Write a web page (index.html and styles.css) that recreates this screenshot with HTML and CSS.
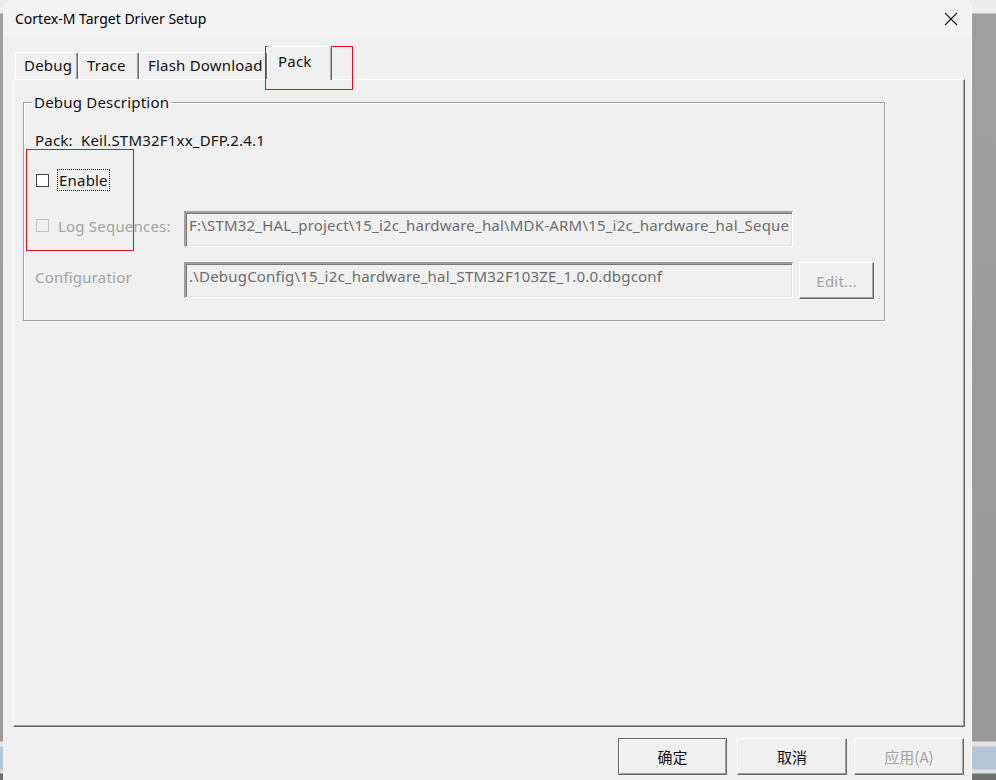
FILE: index.html
```html
<!DOCTYPE html>
<html>
<head>
<meta charset="utf-8">
<link rel="stylesheet" href="styles.css">
</head>
<body>
<div class="window">
  <div class="titlebar">
    <span class="title">Cortex-M Target Driver Setup</span>
    <svg class="close" width="14" height="14" viewBox="0 0 14 14"><path d="M1 1 L13 13 M13 1 L1 13" stroke="#1a1a1a" stroke-width="1.1" fill="none"/></svg>
  </div>
  <div class="body">
    <div class="tabs">
      <div class="tab tab-debug">Debug</div>
      <div class="tab tab-trace">Trace</div>
      <div class="tab tab-flash">Flash Download</div>
      <div class="tab tab-pack active">Pack</div>
    </div>
    <div class="panel">
      <div class="group">
        <div class="group-title">Debug Description</div>
        <div class="pack-row">Pack:&nbsp; Keil.STM32F1xx_DFP.2.4.1</div>
        <div class="enable-row">
          <span class="check"></span>
          <span class="focus">Enable</span>
        </div>
        <div class="log-row">
          <span class="check disabled"></span>
          <span class="lbl log-lbl">Log Sequences:</span>
          <div class="field">F:\STM32_HAL_project\15_i2c_hardware_hal\MDK-ARM\15_i2c_hardware_hal_Seque</div>
        </div>
        <div class="cfg-row">
          <span class="lbl cfg-lbl">Configuratior</span>
          <div class="field">.\DebugConfig\15_i2c_hardware_hal_STM32F103ZE_1.0.0.dbgconf</div>
          <div class="btn edit">Edit...</div>
        </div>
      </div>
    </div>
    <div class="buttons">
      <div class="btn dlg default">确定</div>
      <div class="btn dlg cancel">取消</div>
      <div class="btn dlg apply">应用(<u>A</u>)</div>
    </div>
  </div>
</div>
<div class="mark mark-tab"></div>
<div class="mark mark-checks"></div>
</body>
</html>
```
FILE: styles.css
```css
* { box-sizing: border-box; }
html, body { margin: 0; padding: 0; }
body {
  width: 996px;
  height: 780px;
  overflow: hidden;
  font-family: "Noto Sans", "Noto Sans CJK SC", sans-serif;
  font-size: 15px;
  letter-spacing: 0.2px;
  color: #111;
  background: linear-gradient(to bottom, #ececec 0, #ececec 13px, #9f9f9f 14px, #9a9a9a 741px, #e4e4e4 742px, #e4e4e4 746px, #b6c6d6 747px, #b6c6d6 769px, #dedede 770px, #dedede 773px, #6f6f6f 774px);
}
.window {
  margin-left: 3px;
  width: 969px;
  height: 780px;
  background: #f0f0f0;
  border-radius: 8px 8px 0 0;
  border-right: 1px solid #f7f7f7;
  display: flex;
  flex-direction: column;
}
.titlebar {
  height: 38px;
  flex: none;
  background: #f3f3f3;
  border-radius: 8px 8px 0 0;
  display: flex;
  align-items: center;
  padding-left: 12px;
  padding-right: 13px;
}
.title {
  font-size: 14px;
  letter-spacing: 0;
  color: #000;
  flex: 1;
  margin-top: -1px;
}
.close { display: block; margin-top: -1px; }

.body {
  padding-left: 10px;
  display: flex;
  flex-direction: column;
}
.tabs {
  margin-top: 8px;
  height: 33px;
  display: flex;
  align-items: flex-end;
  padding-left: 2px;
}
.tab {
  height: 27px;
  line-height: 25px;
  padding-left: 8px;
  background: #f0f0f0;
  border-top: 1px solid #fff;
  border-left: 1px solid #fff;
  border-right: 1px solid #6a6a6a;
  box-shadow: inset -1px 0 0 #a0a0a0;
  border-radius: 2px 2px 0 0;
  color: #111;
  white-space: nowrap;
}
.tab-debug { width: 63px; }
.tab-trace { width: 61px; }
.tab-flash { width: 128px; }
.tab-pack {
  width: 65px;
  height: 34px;
  margin-bottom: -1px;
  line-height: 28px;
  padding-left: 10px;
  position: relative;
  z-index: 1;
}

.panel {
  width: 952px;
  height: 648px;
  background: #f0f0f0;
  border-top: 1px solid #fff;
  border-left: 1px solid #fff;
  border-right: 1px solid #6a6a6a;
  border-bottom: 1px solid #6a6a6a;
  box-shadow: inset -1px -1px 0 #a0a0a0;
  padding-top: 22px;
  padding-left: 9px;
}
.group {
  width: 862px;
  height: 219px;
  border: 1px solid #a0a0a0;
  box-shadow: inset 1px 1px 0 #fff, 1px 1px 0 #fff;
  padding-left: 11px;
}
.group-title {
  width: fit-content;
  margin-top: -11px;
  margin-left: -3px;
  padding: 0 2px;
  line-height: 20px;
  background: #f0f0f0;
  color: #111;
}
.pack-row {
  margin-top: 18px;
  line-height: 20px;
  color: #111;
}
.enable-row {
  margin-top: 19px;
  display: flex;
  align-items: center;
  height: 22px;
}
.check {
  width: 13px;
  height: 13px;
  margin-left: 1px;
  border: 1px solid #444;
  background: #fff;
  flex: none;
}
.check.disabled {
  border-color: #c4c4c4;
  background: #f0f0f0;
  margin-top: 8px;
}
.focus {
  margin-left: 8px;
  border: 1px dotted #222;
  padding: 0 1px;
  line-height: 20px;
  color: #111;
}
.log-row, .cfg-row {
  display: flex;
  align-items: flex-start;
  height: 36px;
}
.log-row { margin-top: 20px; }
.cfg-row { margin-top: 15px; }
.lbl {
  color: #a3a3a3;
  line-height: 20px;
  margin-top: 5px;
  flex: none;
  white-space: nowrap;
}
.log-lbl { margin-left: 9px; width: 126px; }
.cfg-lbl { width: 149px; }
.field {
  width: 609px;
  height: 36px;
  flex: none;
  border-top: 2px solid #a0a0a0;
  border-left: 2px solid #a0a0a0;
  border-right: 1px solid #fff;
  border-bottom: 1px solid #fff;
  box-shadow: inset 1px 1px 0 #7a7a7a, inset -1px -1px 0 #e3e3e3;
  padding: 2px 2px 0 3px;
  line-height: 20px;
  color: #6d6d6d;
  white-space: nowrap;
  overflow: hidden;
}
.btn {
  background: #f0f0f0;
  border-top: 1px solid #fff;
  border-left: 1px solid #fff;
  border-right: 1px solid #6a6a6a;
  border-bottom: 1px solid #6a6a6a;
  box-shadow: inset -1px -1px 0 #a0a0a0;
  display: flex;
  align-items: center;
  justify-content: center;
  flex: none;
}
.edit {
  margin-left: 6px;
  width: 75px;
  height: 37px;
  color: #a3a3a3;
}
.buttons {
  margin-top: 11px;
  display: flex;
  justify-content: flex-end;
  padding-right: 7px;
}
.dlg {
  width: 110px;
  height: 37px;
  font-family: "Noto Sans CJK SC", sans-serif;
  font-size: 15px;
  letter-spacing: 0;
  color: #111;
}
.default {
  width: 109px;
  border: 1px solid #6a6a6a;
  box-shadow: inset 1px 1px 0 #fff, inset -1px -1px 0 #a0a0a0;
}
.cancel { margin-left: 10px; }
.apply { margin-left: 7px; color: #a3a3a3; }
.apply u { text-decoration: none; }

.mark {
  position: absolute;
  border: 1px solid #e0141e;
}
.mark-tab { left: 265px; top: 46px; width: 88px; height: 44px; }
.mark-checks { left: 26px; top: 149px; width: 108px; height: 102px; }
```
